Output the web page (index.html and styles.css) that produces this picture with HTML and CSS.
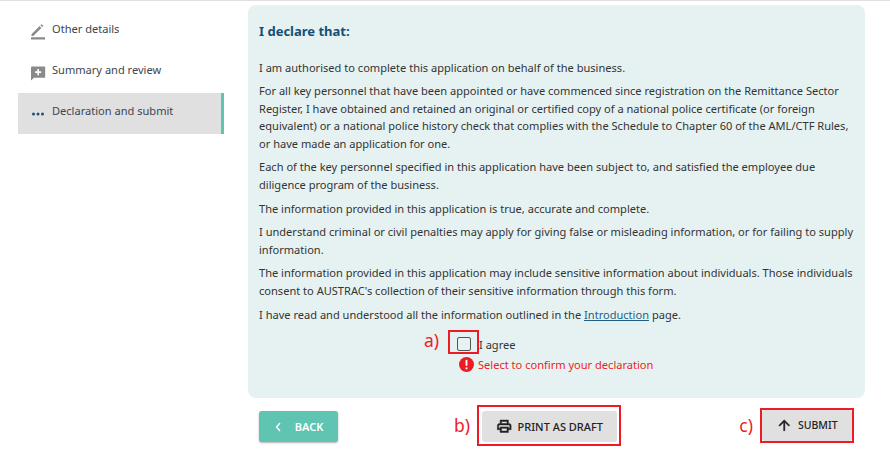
FILE: index.html
```html
<!DOCTYPE html>
<html lang="en">
<head>
<meta charset="utf-8">
<title>Declaration and submit</title>
<link rel="stylesheet" href="styles.css">
</head>
<body>
<div class="page">
  <nav class="side">
    <div class="step">
      <svg class="ico" viewBox="0 0 16 16"><path fill="#8a8a8a" d="M1.500 12 1.500 10.200 9.600 2.100 11.400 3.900 3.300 12Z M10.400 1.300 11.200.5a.6.6 0 0 1 .8 0l1 1a.6.6 0 0 1 0 .8l-.8.8Z M1 13.300H15V15.600H1Z"/></svg>
      <span>Other details</span>
    </div>
    <div class="step">
      <svg class="ico" viewBox="0 0 16 16"><path fill="#8a8a8a" d="M2 1.500H14.500Q15.200 1.500 15.200 2.200V12Q15.200 12.700 14.500 12.700H4L1 15.500V2.500Q1 1.500 2 1.500Z"/><path fill="#fff" d="M7.300 4H9V6.300H11.200V8H9V10.200H7.300V8H5.100V6.300H7.300Z"/></svg>
      <span>Summary and review</span>
    </div>
    <div class="step active">
      <svg class="ico" viewBox="0 0 16 16"><circle cx="3.500" cy="8" r="1.500" fill="#1f4e79"/><circle cx="8" cy="8" r="1.500" fill="#1f4e79"/><circle cx="12.500" cy="8" r="1.500" fill="#1f4e79"/></svg>
      <span>Declaration and submit</span>
    </div>
  </nav>
  <main class="main">
    <section class="panel">
      <h2>I declare that:</h2>
      <p>I am authorised to complete this application on behalf of the business.</p>
      <p>For all key personnel that have been appointed or have commenced since registration on the Remittance Sector<br>Register, I have obtained and retained an original or certified copy of a national police certificate (or foreign<br>equivalent) or a national police history check that complies with the Schedule to Chapter 60 of the AML/CTF Rules,<br>or have made an application for one.</p>
      <p>Each of the key personnel specified in this application have been subject to, and satisfied the employee due<br>diligence program of the business.</p>
      <p>The information provided in this application is true, accurate and complete.</p>
      <p>I understand criminal or civil penalties may apply for giving false or misleading information, or for failing to supply<br>information.</p>
      <p>The information provided in this application may include sensitive information about individuals. Those individuals<br>consent to AUSTRAC's collection of their sensitive information through this form.</p>
      <p>I have read and understood all the information outlined in the <a href="#">Introduction</a> page.</p>
      <div class="agree">
        <div class="agree-row">
          <span class="mark mark-a">a)</span>
          <span class="red-box check-box"><span class="check"></span></span>
          <span class="agree-label">I agree</span>
        </div>
        <div class="error">
          <svg class="err-ico" viewBox="0 0 16 16"><circle cx="8" cy="8" r="8" fill="#ed1c24"/><rect x="7" y="3" width="2" height="6.500" rx="1" fill="#fff"/><circle cx="8" cy="12" r="1.200" fill="#fff"/></svg>
          <span>Select to confirm your declaration</span>
        </div>
      </div>
    </section>
    <div class="actions">
      <button class="btn back" type="button">
        <svg class="back-ico" viewBox="0 0 8 12"><path d="M6 2 2.500 6 6 10" fill="none" stroke="#fff" stroke-width="1.400"/></svg>
        BACK
      </button>
      <div class="marked print-wrap">
        <span class="mark">b)</span>
        <span class="red-box print-box"><button class="btn grey print" type="button">
          <svg class="btn-ico" viewBox="0 0 24 24"><path fill="#222" stroke="#222" stroke-width=".7" fill-rule="evenodd" d="M6 3H18V8H19C20.700 8 22 9.300 22 11V17H18V21H6V17H2V11C2 9.300 3.300 8 5 8H6ZM8 5V8H16V5ZM5 10C4.400 10 4 10.400 4 11V15H6V13H18V15H20V11C20 10.400 19.600 10 19 10ZM8 15V19H16V15Z"/></svg>
          PRINT AS DRAFT
        </button></span>
      </div>
      <div class="marked submit-wrap">
        <span class="mark">c)</span>
        <span class="red-box"><button class="btn grey submit" type="button">
          <svg class="btn-ico" viewBox="0 0 24 24"><path fill="#222" stroke="#222" stroke-width=".6" d="M4 12l1.410 1.410L11 7.830V20h2V7.830l5.580 5.590L20 12l-8-8-8 8z"/></svg>
          SUBMIT
        </button></span>
      </div>
    </div>
  </main>
</div>
</body>
</html>
```
FILE: styles.css
```css
* { box-sizing: border-box; }
html, body { margin: 0; padding: 0; }
body {
  width: 890px;
  height: 451px;
  overflow: hidden;
  background: #fff;
  border-top: 1px solid #e0e0e0;
  font-family: "Noto Sans", "Open Sans", sans-serif;
  font-size: 11.070px;
  color: #333;
}
.page {
  display: flex;
  padding: 4px 25px 0 18px;
  gap: 24px;
}
.side {
  width: 206px;
  flex: none;
  display: flex;
  flex-direction: column;
  padding-top: 6px;
}
.step {
  height: 41px;
  display: flex;
  align-items: flex-start;
  gap: 6px;
  padding: 8px 0 0 12px;
  line-height: 20px;
  color: #3c4650;
}
.step.active {
  background: #e0e0e0;
  border-right: 3px solid #5fc4b1;
}
.ico { width: 16px; height: 16px; margin-top: 5px; flex: none; }
.main { width: 617px; flex: none; }
.panel {
  height: 393px;
  background: #e6f2f2;
  border-radius: 8px;
  padding: 16px 11px 0;
}
h2 {
  margin: 0 0 17.500px;
  font-size: 13px;
  line-height: 20px;
  font-weight: 700;
  color: #134f78;
}
p {
  margin: 0 0 6.200px;
  line-height: 17.500px;
  white-space: nowrap;
  color: #333;
}
a { color: #1f5f85; text-decoration: underline; }
.agree { margin-top: 7px; padding-left: 165px; }
.agree-row { display: flex; align-items: center; height: 24px; }
.mark { color: #ed1c24; font-size: 17.500px; line-height: 20px; }
.mark-a { width: 24px; align-self: flex-start; }
.red-box { display: inline-flex; border: 2px solid #ed1c24; }
.check-box { width: 31px; height: 24px; align-items: flex-end; justify-content: center; }
.check {
  width: 14px;
  height: 14px;
  margin-bottom: 1px;
  border: 1.500px solid #555;
  border-radius: 2px;
}
.agree-label { position: relative; top: 2px; }
.error {
  display: flex;
  align-items: center;
  gap: 4px;
  margin: 1.500px 0 0 35px;
  color: #ed1c24;
  height: 18px;
}
.err-ico { width: 15px; height: 15px; flex: none; }
.actions {
  display: flex;
  align-items: center;
  height: 42px;
  margin-top: 6px;
  padding-left: 11px;
}
.marked { display: flex; align-items: center; gap: 7px; }
.print-wrap { margin-left: 116px; }
.submit-wrap { margin-left: auto; margin-right: 11px; }
.btn {
  display: inline-flex;
  align-items: center;
  justify-content: center;
  border: 0;
  border-radius: 3px;
  font-family: inherit;
  font-size: 11px;
  font-weight: 500;
  padding: 0;
}
.back {
  width: 79px;
  height: 31px;
  margin-top: 3px;
  background: #5fc4b1;
  color: #fff;
  gap: 13px;
  font-weight: 600;
  box-shadow: 0 1px 2px rgba(0,0,0,.3);
}
.back-ico { width: 8px; height: 12px; }
.grey { background: #e0e0e0; color: #222; height: 31px; gap: 5px; }
.print-box { padding: 4px 2px 2px 3px; }
.print { width: 135px; }
.submit { width: 90px; font-size: 10.500px; }
.btn-ico { width: 16.500px; height: 16.500px; }
```
